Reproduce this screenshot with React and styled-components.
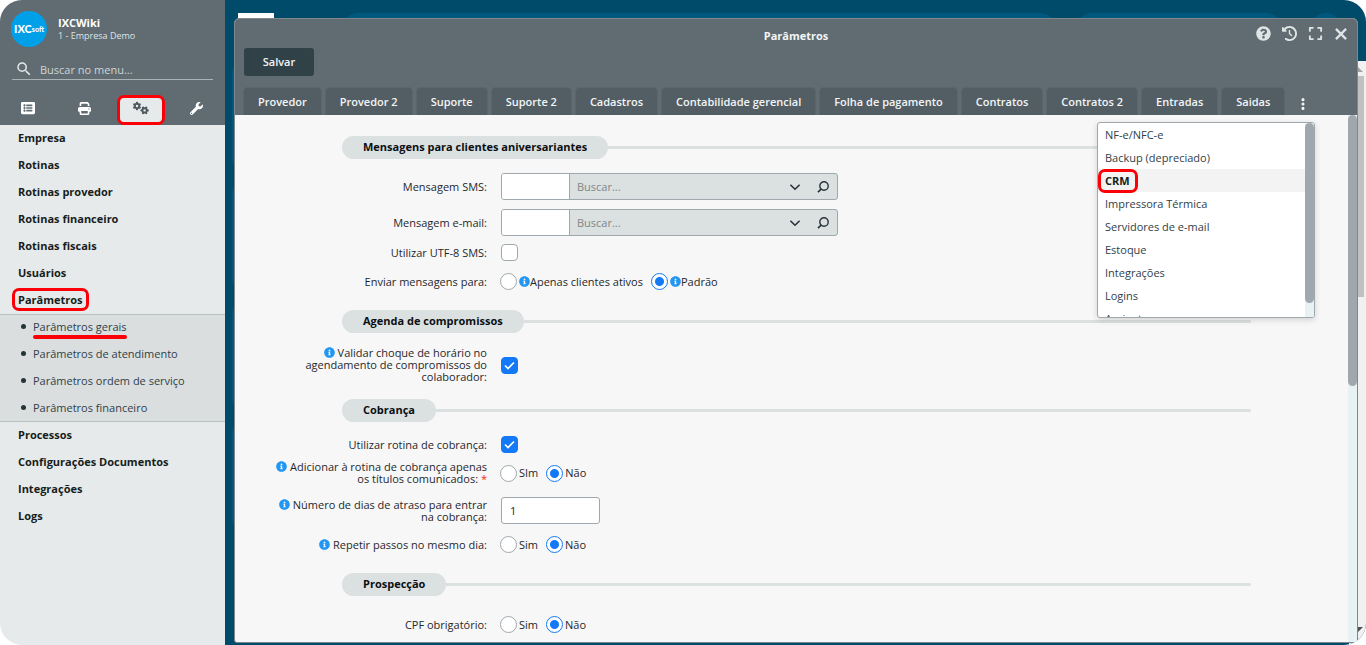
import React, { useState } from 'react';
import styled, { createGlobalStyle, css } from 'styled-components';
import { FaListAlt, FaWrench, FaQuestionCircle, FaExpand, FaInfoCircle } from 'react-icons/fa';
import { FaClockRotateLeft, FaEllipsisVertical, FaGears, FaPrint } from 'react-icons/fa6';
import { MdSearch } from 'react-icons/md';

const c = {
  navy: '#004b6a',
  navyLight: '#00587e',
  slate: '#606c71',
  tab: '#525e64',
  dark: '#304148',
  light: '#e7eaea',
  sub: '#dadedf',
  pill: '#dbe0e1',
  line: '#9fa8ad',
  body: '#f7f7f7',
  red: '#fb0007',
  blue: '#1479f6',
  info: '#2196f3',
  track: '#e8f1f4',
};

const GlobalStyle = createGlobalStyle`
  * {
    box-sizing: border-box;
  }
  body {
    margin: 0;
    background: white;
    color: #1f282c;
    font: 11px/12px 'Open Sans', 'Noto Sans', sans-serif;
  }
  button, input {
    font: inherit;
    color: inherit;
  }
  button {
    padding: 0;
    border: 0;
    background: none;
    cursor: pointer;
  }
  ul {
    list-style: none;
    margin: 0;
    padding: 0;
  }
`;

const Page = styled.div`
  display: flex;
  height: 100vh;
  overflow: hidden;
  border-radius: 22px;
`;

/* sidebar */

const Sidebar = styled.aside`
  display: flex;
  flex-direction: column;
  flex: none;
  width: 225px;
  background: ${c.light};
`;

const SideHeader = styled.header`
  display: flex;
  flex-direction: column;
  height: 125px;
  flex: none;
  background: ${c.slate};
`;

const Account = styled.div`
  display: flex;
  align-items: center;
  gap: 11px;
  padding: 11px 11px 0;
  color: #dfe4e6;
`;

const Logo = styled.div`
  display: flex;
  align-items: center;
  justify-content: center;
  width: 36px;
  height: 36px;
  border-radius: 50%;
  background: #00a0e9;
  color: white;
  font: 900 11px/12px Lato, sans-serif;
`;

const LogoSmall = styled.span`
  font-size: 7px;
`;

const AccountName = styled.div`
  padding-top: 2px;
  color: white;
  font-weight: 700;
  line-height: 12px;
`;

const AccountCompany = styled.div`
  font-size: 9px;
  line-height: 14px;
`;

const MenuSearch = styled.label`
  display: flex;
  align-items: center;
  gap: 7px;
  height: 23px;
  margin: 12px 12px 0;
  padding: 0 3px;
  border-bottom: 1px solid #a9b2b6;
  color: #e4e8e9;
`;

const MenuInput = styled.input`
  flex: 1;
  min-width: 0;
  padding: 2px 0 0;
  border: 0;
  outline: 0;
  background: none;
  &::placeholder {
    color: #cfd5d7;
    opacity: 1;
  }
`;

const SideTabs = styled.nav`
  display: grid;
  flex: none;
  grid-template-columns: repeat(4, 1fr);
  justify-items: center;
  align-items: center;
  height: 30px;
  margin-top: 15px;
`;

const SideTab = styled.button`
  position: relative;
  display: flex;
  align-items: center;
  justify-content: center;
  width: 48px;
  height: 30px;
  padding-bottom: 4px;
  color: white;
  font-size: 14px;
  ${p => p.$active && css`
    border: 3px solid ${c.red};
    border-radius: 7px;
    background: ${c.light};
    color: #4d5a60;
    font-size: 16px;
  `}
`;

const MenuItem = styled.li`
  display: flex;
  align-items: center;
  height: 27px;
  padding: 0 0 2px 18px;
  color: #161d20;
  font-weight: 700;
`;

const MenuLink = styled.a`
  color: inherit;
  text-decoration: none;
  ${p => p.$boxed && css`
    margin-left: -6px;
    padding: 3px 3px 2px 3px;
    border: 3px solid ${c.red};
    border-radius: 7px;
  `}
`;

const SubMenu = styled.ul`
  background: ${c.sub};
  box-shadow: inset 0 1px #b9c1c4, inset 0 -1px #b9c1c4;
`;

const SubItem = styled.li`
  display: flex;
  align-items: center;
  gap: 7px;
  height: 27px;
  padding: 0 0 2px 21px;
  color: #304148;
  &::before {
    content: '';
    width: 5px;
    height: 5px;
    border-radius: 50%;
    background: #26343a;
  }
`;

const SubLink = styled.a`
  position: relative;
  color: inherit;
  text-decoration: none;
  ${p => p.$underlined && css`
    &::after {
      content: '';
      position: absolute;
      left: 0;
      right: 0;
      bottom: -6px;
      height: 4px;
      border-radius: 2px;
      background: ${c.red};
    }
  `}
`;

/* desktop behind the window */

const Desktop = styled.main`
  position: relative;
  display: flex;
  flex: 1;
  min-width: 0;
  padding: 18px 8px 2px 9px;
  background: ${c.navy};
`;

const Backdrop = styled.div`
  position: absolute;
  inset: 0;
  display: flex;
  flex-direction: column;
`;

const TopBar = styled.div`
  display: flex;
  flex: none;
  height: 61px;
  padding: 13px 24px 0 13px;
`;

const Brand = styled.div`
  width: 36px;
  height: 30px;
  margin-right: 68px;
  background: white;
`;

const TopPill = styled.div`
  flex: ${p => p.$grow || 'none'};
  width: ${p => p.$width || 'auto'};
  height: 32px;
  margin-right: ${p => p.$space || 0};
  border-radius: 16px;
  background: ${c.navyLight};
`;

const BackArea = styled.div`
  display: flex;
  flex: 1;
  justify-content: space-between;
`;

const Tiles = styled.div`
  display: flex;
  flex-direction: column;
  gap: 10px;
  width: 60px;
  padding-left: 7px;
`;

const Tile = styled.div`
  height: 110px;
  border-radius: 12px;
  background: ${c.navyLight};
`;

const PageScroll = styled.div`
  display: flex;
  flex-direction: column;
  justify-content: space-between;
  width: 17px;
  padding: 6px 2px 13px;
  background: #f1f1f1;
`;

const Arrow = styled.i`
  align-self: center;
  border: 5px solid transparent;
  border-top-width: 0;
  border-bottom-color: #a3a3a3;
  ${p => p.$down && css`
    border-width: 5px 5px 0;
    border-top-color: #505050;
  `}
`;

const PageThumb = styled.div`
  height: 221px;
  margin: 4px 0 auto;
  background: #c1c1c1;
`;

/* window */

const Window = styled.section`
  position: relative;
  display: flex;
  flex-direction: column;
  flex: 1;
  min-width: 0;
  border: 1px solid #7c888d;
  border-radius: 5px 5px 3px 3px;
  background: ${c.body};
`;

const WindowHeader = styled.header`
  display: flex;
  flex-direction: column;
  flex: none;
  height: 96px;
  padding: 0 8px;
  border-radius: 4px 4px 0 0;
  background: ${c.slate};
  color: #f3f5f6;
`;

const TitleRow = styled.div`
  display: grid;
  grid-template-columns: 1fr auto 1fr;
  align-items: center;
  height: 29px;
`;

const Title = styled.h1`
  grid-column: 2;
  margin: 5px 0 0;
  font-size: 11px;
  font-weight: 700;
`;

const WindowActions = styled.div`
  display: flex;
  justify-content: flex-end;
  align-items: center;
  gap: 10px;
  color: #dfe4e5;
`;

const IconButton = styled.button`
  display: flex;
  justify-content: center;
  width: 16px;
  font-size: 15px;
`;

const SaveButton = styled.button`
  align-self: flex-start;
  width: 70px;
  height: 28px;
  margin-left: 1px;
  border-radius: 3px;
  background: ${c.dark};
  font-weight: 600;
`;

const Tabs = styled.nav`
  display: flex;
  gap: 3px;
  margin-top: auto;
`;

const Tab = styled.button`
  height: 28px;
  padding: 0 14px;
  border: 1px solid #5a666b;
  border-bottom: 0;
  border-radius: 5px 5px 0 0;
  background: ${c.tab};
  font-weight: 600;
  white-space: nowrap;
`;

const MoreButton = styled.button`
  display: flex;
  align-items: center;
  justify-content: center;
  width: 30px;
  padding-top: 5px;
  font-size: 14px;
`;

const WindowBody = styled.div`
  display: flex;
  flex: 1;
  min-height: 0;
`;

const Form = styled.form`
  flex: 1;
  overflow: hidden;
  padding-top: 21px;
`;

const ScrollTrack = styled.div`
  width: 9px;
  flex: none;
  background: ${c.track};
`;

const ScrollThumb = styled.div`
  height: ${p => p.$height};
  border-radius: 5px;
  background: #a0a8ae;
`;

const Section = styled.section`
  margin-bottom: ${p => p.$space || '16px'};
`;

const SectionHead = styled.div`
  display: flex;
  align-items: center;
  margin: 0 97px 0 107px;
  &::after {
    content: '';
    flex: 1;
    height: 3px;
    border-radius: 0 2px 2px 0;
    background: ${c.pill};
  }
`;

const SectionTitle = styled.h2`
  margin: 0;
  padding: 0 21px 1px;
  border-radius: 12px;
  background: ${c.pill};
  color: #0b0f11;
  font-size: 11px;
  font-weight: 700;
  line-height: 22px;
`;

const Row = styled.div`
  display: grid;
  grid-template-columns: 252px auto;
  justify-content: start;
  align-items: center;
  gap: 14px;
  margin-top: ${p => p.$space || '14px'};
`;

const Label = styled.label`
  justify-self: end;
  max-width: 214px;
  text-align: right;
`;

const Required = styled.span`
  color: #f22;
`;

const InfoIcon = styled(FaInfoCircle)`
  color: ${c.info};
  font-size: 11px;
  vertical-align: -1px;
`;

const TextInput = styled.input`
  width: ${p => p.$width};
  height: 27px;
  padding: 0 8px;
  border: 1px solid ${c.line};
  border-radius: 3px;
  outline: 0;
  background: white;
`;

const Lookup = styled.div`
  display: flex;
  align-items: center;
  width: 337px;
  height: 27px;
  border: 1px solid ${c.line};
  border-radius: 3px;
  background: ${c.pill};
  overflow: hidden;
`;

const LookupCode = styled.input`
  width: 68px;
  height: 25px;
  padding: 0 8px;
  border: 0;
  border-right: 1px solid ${c.line};
  outline: 0;
  background: white;
`;

const LookupText = styled.input`
  flex: 1;
  min-width: 0;
  padding: 0 7px;
  border: 0;
  outline: 0;
  background: none;
  &::placeholder {
    color: #80878a;
    opacity: 1;
  }
`;

const LookupButton = styled.button`
  display: flex;
  align-items: center;
  justify-content: center;
  width: 28px;
  height: 25px;
`;

const Check = styled.input`
  appearance: none;
  width: 17px;
  height: 17px;
  margin: 0;
  border: 1px solid ${c.line};
  border-radius: 4px;
  background: white;
  &:checked {
    border-color: ${c.blue};
    background: ${c.blue} url("data:image/svg+xml,%3Csvg xmlns='http://www.w3.org/2000/svg' viewBox='0 0 15 15'%3E%3Cpath d='M3 7.5l3 3 6-6' fill='none' stroke='white' stroke-width='1.6'/%3E%3C/svg%3E");
  }
`;

const Radios = styled.div`
  display: flex;
  gap: 8px;
  margin-left: -1px;
`;

const RadioLabel = styled.label`
  display: flex;
  align-items: center;
`;

const Radio = styled.input`
  appearance: none;
  width: 17px;
  height: 17px;
  margin: 0 2px 0 0;
  border: 1px solid ${c.line};
  border-radius: 50%;
  background: white;
  &:checked {
    border-color: ${c.blue};
    background: radial-gradient(circle, ${c.blue} 4px, white 5px);
  }
`;

/* list of the tabs that do not fit */

const More = styled.div`
  position: absolute;
  top: 103px;
  right: 42px;
  display: flex;
  width: 218px;
  height: 196px;
  border: 1px solid ${c.line};
  border-radius: 3px;
  background: white;
  box-shadow: 0 2px 6px rgba(0, 0, 0, .15);
  overflow: hidden;
`;

const MoreList = styled.ul`
  flex: 1;
  overflow: hidden;
`;

const MoreItem = styled.li`
  display: flex;
  align-items: center;
  height: 23px;
  padding-left: 7px;
  color: #304148;
  ${p => p.$active && css`
    background: #f3f3f3;
    color: #161d20;
    font-weight: 700;
  `}
`;

const MoreLink = styled.a`
  color: inherit;
  text-decoration: none;
  ${p => p.$boxed && css`
    margin-left: -7px;
    padding: 3px 5px 3px 4px;
    border: 3px solid ${c.red};
    border-radius: 7px;
  `}
`;

const menuTop = ['Empresa', 'Rotinas', 'Rotinas provedor', 'Rotinas financeiro', 'Rotinas fiscais', 'Usuários', 'Parâmetros'];
const menuSub = ['Parâmetros gerais', 'Parâmetros de atendimento', 'Parâmetros ordem de serviço', 'Parâmetros financeiro'];
const menuBottom = ['Processos', 'Configurações Documentos', 'Integrações', 'Logs'];

const tabs = [
  'Provedor', 'Provedor 2', 'Suporte', 'Suporte 2', 'Cadastros', 'Contabilidade gerencial',
  'Folha de pagamento', 'Contratos', 'Contratos 2', 'Entradas', 'Saidas',
];
const moreTabs = [
  'NF-e/NFC-e', 'Backup (depreciado)', 'CRM', 'Impressora Térmica', 'Servidores de e-mail',
  'Estoque', 'Integrações', 'Logins', 'Assinatura',
];

const CloseIcon = () => (
  <svg width="12" height="12" viewBox="0 0 13 13" fill="none" stroke="currentColor" strokeWidth="2.5">
    <path d="M1 1l11 11M12 1L1 12" />
  </svg>
);

const ChevronIcon = () => (
  <svg width="12" height="12" viewBox="0 0 12 12" fill="none" stroke="#26343a" strokeWidth="1.6">
    <path d="M1.4 3.7L6 8.2l4.6-4.5" />
  </svg>
);

const LookupIcon = () => (
  <svg width="12" height="12" viewBox="0 0 12 12" fill="none" stroke="#26343a" strokeWidth="1.4">
    <circle cx="7" cy="5" r="4.2" />
    <path d="M4.2 8L1 11.2" strokeWidth="1.7" />
  </svg>
);

const LookupField = ({ id, label, space }) => (
  <Row $space={space}>
    <Label htmlFor={id}>{label}</Label>
    <Lookup>
      <LookupCode id={id} />
      <LookupText placeholder="Buscar..." aria-label={`Buscar ${label}`} />
      <LookupButton type="button" aria-label="Abrir lista"><ChevronIcon /></LookupButton>
      <LookupButton type="button" aria-label="Pesquisar"><LookupIcon /></LookupButton>
    </Lookup>
  </Row>
);

const CheckField = ({ id, label, space, info, checked }) => (
  <Row $space={space}>
    <Label htmlFor={id}>{info && <InfoIcon />}{info && ' '}{label}</Label>
    <Check id={id} type="checkbox" defaultChecked={checked} />
  </Row>
);

const RadioField = ({ id, label, space, info, required, optionInfo, options }) => {
  const [value, setValue] = useState(options[1]);
  return (
    <Row $space={space} role="radiogroup" aria-labelledby={id}>
      <Label as="span" id={id}>
        {info && <InfoIcon />}{info && ' '}{label}{required && <Required> *</Required>}
      </Label>
      <Radios>
        {options.map(o => (
          <RadioLabel key={o}>
            <Radio type="radio" name={id} checked={value === o} onChange={() => setValue(o)} />
            {optionInfo && <InfoIcon />}{o}
          </RadioLabel>
        ))}
      </Radios>
    </Row>
  );
};

const SideMenu = () => (
  <Sidebar>
    <SideHeader>
      <Account>
        <Logo>IXC<LogoSmall>soft</LogoSmall></Logo>
        <div>
          <AccountName>IXCWiki</AccountName>
          <AccountCompany>1 - Empresa Demo</AccountCompany>
        </div>
      </Account>
      <MenuSearch>
        <MdSearch size={18} />
        <MenuInput placeholder="Buscar no menu..." aria-label="Buscar no menu" />
      </MenuSearch>
      <SideTabs>
        <SideTab aria-label="Menu"><FaListAlt /></SideTab>
        <SideTab aria-label="Relatórios"><FaPrint size={13} /></SideTab>
        <SideTab aria-label="Configurações" $active><FaGears /></SideTab>
        <SideTab aria-label="Ferramentas"><FaWrench size={13} /></SideTab>
      </SideTabs>
    </SideHeader>
    <ul>
      {menuTop.map(t => (
        <MenuItem key={t}><MenuLink href="#" $boxed={t === 'Parâmetros'}>{t}</MenuLink></MenuItem>
      ))}
    </ul>
    <SubMenu>
      {menuSub.map((t, i) => (
        <SubItem key={t}><SubLink href="#" $underlined={i === 0}>{t}</SubLink></SubItem>
      ))}
    </SubMenu>
    <ul>
      {menuBottom.map(t => <MenuItem key={t}><MenuLink href="#">{t}</MenuLink></MenuItem>)}
    </ul>
  </Sidebar>
);

export default function App() {
  return (
    <Page>
      <GlobalStyle />
      <SideMenu />
      <Desktop>
        <Backdrop>
          <TopBar>
            <Brand />
            <TopPill $grow="1" $space="20px" />
            <TopPill $width="206px" $space="28px" />
            <TopPill $width="32px" />
          </TopBar>
          <BackArea>
            <Tiles><Tile /><Tile /><Tile /><Tile /></Tiles>
            <PageScroll>
              <Arrow />
              <PageThumb />
              <Arrow $down />
            </PageScroll>
          </BackArea>
        </Backdrop>
        <Window>
          <WindowHeader>
            <TitleRow>
              <Title>Parâmetros</Title>
              <WindowActions>
                <IconButton aria-label="Ajuda"><FaQuestionCircle /></IconButton>
                <IconButton aria-label="Histórico"><FaClockRotateLeft /></IconButton>
                <IconButton aria-label="Tela cheia"><FaExpand /></IconButton>
                <IconButton aria-label="Fechar"><CloseIcon /></IconButton>
              </WindowActions>
            </TitleRow>
            <SaveButton>Salvar</SaveButton>
            <Tabs>
              {tabs.map(t => <Tab key={t}>{t}</Tab>)}
              <MoreButton aria-label="Mais abas"><FaEllipsisVertical /></MoreButton>
            </Tabs>
          </WindowHeader>
          <WindowBody>
            <Form>
              <Section $space="20px">
                <SectionHead><SectionTitle>Mensagens para clientes aniversariantes</SectionTitle></SectionHead>
                <LookupField id="sms" label="Mensagem SMS:" />
                <LookupField id="email" label="Mensagem e-mail:" space="9px" />
                <CheckField id="utf8" label="Utilizar UTF-8 SMS:" space="8px" />
                <RadioField id="enviar" label="Enviar mensagens para:" space="12px" options={['Apenas clientes ativos', 'Padrão']} optionInfo />
              </Section>
              <Section>
                <SectionHead><SectionTitle>Agenda de compromissos</SectionTitle></SectionHead>
                <CheckField id="choque" label="Validar choque de horário no agendamento de compromissos do colaborador:" info checked />
              </Section>
              <Section $space="20px">
                <SectionHead><SectionTitle>Cobrança</SectionTitle></SectionHead>
                <CheckField id="rotina" label="Utilizar rotina de cobrança:" checked />
                <RadioField id="titulos" label="Adicionar à rotina de cobrança apenas os títulos comunicados:" space="8px" options={['SIm', 'Não']} info required />
                <Row $space="12px">
                  <Label htmlFor="dias"><InfoIcon /> Número de dias de atraso para entrar na cobrança:</Label>
                  <TextInput id="dias" $width="99px" defaultValue="1" />
                </Row>
                <RadioField id="repetir" label="Repetir passos no mesmo dia:" space="12px" options={['Sim', 'Não']} info />
              </Section>
              <Section>
                <SectionHead><SectionTitle>Prospecção</SectionTitle></SectionHead>
                <RadioField id="cpf" label="CPF obrigatório:" space="20px" options={['Sim', 'Não']} />
              </Section>
            </Form>
            <ScrollTrack><ScrollThumb $height="271px" /></ScrollTrack>
          </WindowBody>
          <More>
            <MoreList>
              {moreTabs.map(t => (
                <MoreItem key={t} $active={t === 'CRM'}><MoreLink href="#" $boxed={t === 'CRM'}>{t}</MoreLink></MoreItem>
              ))}
            </MoreList>
            <ScrollTrack><ScrollThumb $height="180px" /></ScrollTrack>
          </More>
        </Window>
      </Desktop>
    </Page>
  );
}
